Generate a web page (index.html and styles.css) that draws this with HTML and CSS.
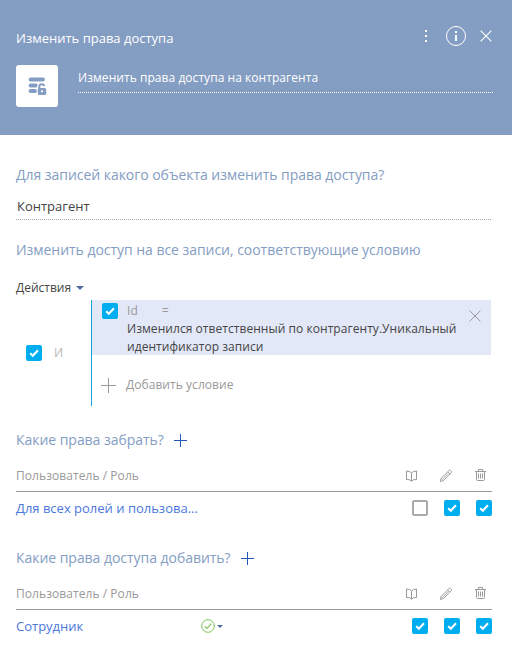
FILE: index.html
```html
<!DOCTYPE html>
<html lang="ru">
<head>
<meta charset="utf-8">
<title>Изменить права доступа</title>
<link rel="stylesheet" href="styles.css">
</head>
<body>
<svg width="0" height="0" class="defs">
  <symbol id="check" viewBox="0 0 16 16"><path d="M4.2 8.2 6.8 10.7 12 5.2" fill="none" stroke="#fff" stroke-width="2.1"/></symbol>
  <symbol id="book" viewBox="0 0 12 12"><path d="M5.5 3 3.8 1.7 .5 1V9.5L3.8 9.8 5.5 11.3 7.2 9.8 10.5 9.5V1L7.2 1.7ZM5.5 3V11" fill="none" stroke="currentColor"/></symbol>
  <symbol id="pencil" viewBox="0 0 14 14"><path d="M1.2 12.5 2.1 9.4 10 1.5Q10.8.8 11.6 1.5L12.3 2.2Q13 3 12.3 3.8L4.3 11.7ZM8.6 2.9 10.9 5.2M2.1 9.4 4.3 11.7M3.7 10 9.7 4.1" fill="none" stroke="currentColor" stroke-width=".9"/></symbol>
  <symbol id="trash" viewBox="0 0 11 13"><path d="M0 2.5H11M3.5 2.5V.5H7.5V2.5M1.5 2.5V10.5Q1.5 11.5 2.5 11.5H8.5Q9.5 11.5 9.5 10.5V2.5M3.5 4.5V9.5M5.5 4.5V9.5M7.5 4.5V9.5" fill="none" stroke="currentColor"/></symbol>
  <symbol id="plus" viewBox="0 0 13 13"><path d="M0 6.5H13M6.5 0V13" stroke="currentColor"/></symbol>
</svg>
<header class="header">
  <div class="bar">
    <h1 class="title">Изменить права доступа</h1>
    <svg class="dots" width="2" height="12" viewBox="0 0 2 12" fill="#fff"><path d="M0 0H2V2H0ZM0 5H2V7H0ZM0 10H2V12H0Z"/></svg>
    <svg class="info" width="20" height="20" viewBox="0 0 20 20"><circle cx="10" cy="10" r="9.5" fill="none" stroke="#fff"/><path d="M9 5H11V7H9ZM9 9H11V15H9Z" fill="#fff"/></svg>
    <svg width="12" height="12" viewBox="0 0 12 12"><path d="M.6.6 11.4 11.4M11.4.6.6 11.4" stroke="#fff" stroke-width="1.1"/></svg>
  </div>
  <div class="name-row">
    <div class="tile">
      <svg width="20" height="20" viewBox="0 0 20 20"><g stroke="#849dc3" fill="none"><path d="M3.5 3.5H16M3.5 9.5H9M3.5 15H8" stroke-width="3.8" stroke-linecap="round"/><path d="M12.2 13V10.8Q12.2 8 14.8 8T17.2 10" stroke="#fff" stroke-width="4"/><rect x="10" y="11.5" width="10" height="8" rx="2" fill="#fff" stroke="none"/><rect x="10.8" y="12" width="8.4" height="7" rx="1.5" fill="#849dc3" stroke="none"/><path d="M12.3 13V10.6Q12.3 8.2 14.8 8.2T17 10.2" stroke-width="2"/></g><circle cx="15" cy="15.3" r="1.1" fill="#fff"/></svg>
    </div>
    <div class="name">Изменить права доступа на контрагента</div>
  </div>
</header>
<main class="content">
  <h2 class="heading h-object">Для записей какого объекта изменить права доступа?</h2>
  <div class="object">Контрагент</div>
  <h2 class="heading h-filter">Изменить доступ на все записи, соответствующие условию</h2>
  <div class="actions">Действия <i class="caret"></i></div>
  <div class="filter">
    <div class="group"><span class="box on"><svg width="16" height="16"><use href="#check"/></svg></span><span class="and">И</span></div>
    <div class="conditions">
      <div class="condition">
        <span class="box on"><svg width="16" height="16"><use href="#check"/></svg></span>
        <div class="expr">
          <div class="left"><span>Id</span><span>=</span></div>
          <div>Изменился ответственный по контрагенту.Уникальный идентификатор записи</div>
        </div>
        <svg class="remove" width="12" height="12" viewBox="0 0 12 12"><path d="M.6.6 11.4 11.4M11.4.6.6 11.4" stroke="#999"/></svg>
      </div>
      <div class="add"><svg width="15" height="15" viewBox="0 0 15 15"><path d="M0 7.5H15M7.5 0V15" stroke="#999"/></svg><span>Добавить условие</span></div>
    </div>
  </div>
  <section class="rights">
    <h2 class="heading">Какие права забрать? <svg class="plus" width="13" height="13"><use href="#plus"/></svg></h2>
    <div class="thead"><span>Пользователь / Роль</span>
      <svg class="book" width="12" height="12"><use href="#book"/></svg><svg class="pencil" width="14" height="14"><use href="#pencil"/></svg><svg class="trash" width="11" height="13"><use href="#trash"/></svg></div>
    <div class="row"><span class="role">Для всех ролей и пользова...</span>
      <div class="checks"><span class="box"></span><span class="box on"><svg width="16" height="16"><use href="#check"/></svg></span><span class="box on"><svg width="16" height="16"><use href="#check"/></svg></span></div></div>
  </section>
  <section class="rights">
    <h2 class="heading">Какие права доступа добавить? <svg class="plus" width="13" height="13"><use href="#plus"/></svg></h2>
    <div class="thead"><span>Пользователь / Роль</span>
      <svg class="book" width="12" height="12"><use href="#book"/></svg><svg class="pencil" width="14" height="14"><use href="#pencil"/></svg><svg class="trash" width="11" height="13"><use href="#trash"/></svg></div>
    <div class="row"><span class="role">Сотрудник</span>
      <svg class="allowed" width="14" height="14" viewBox="0 0 14 14" fill="none" stroke="#7bc45c"><circle cx="7" cy="7" r="6.3"/><path d="M3.8 7.4 6 9.5 10.3 4.7" stroke-width="1.2"/></svg><i class="caret small"></i>
      <div class="checks"><span class="box on"><svg width="16" height="16"><use href="#check"/></svg></span><span class="box on"><svg width="16" height="16"><use href="#check"/></svg></span><span class="box on"><svg width="16" height="16"><use href="#check"/></svg></span></div></div>
  </section>
</main>
</body>
</html>
```
FILE: styles.css
```css
* { box-sizing: border-box; }
body { margin: 0; background: #fff; color: #444; font: 13px/20px "Open Sans", sans-serif; }
svg { display: block; flex: none; }
.defs { display: none; }
h1, h2 { margin: 0; font-weight: 400; }
.header { height: 135px; padding: 26px 19px 0 16px; background: #849dc3; color: #fff; }
.bar { display: flex; align-items: center; height: 20px; padding-right: 1px; }
.title { flex: 1; font-size: 13px; line-height: 20px; padding-top: 4px; }
.info { margin: 0 14px 0 19px; }
.name-row { display: flex; margin-top: 19px; gap: 20px; }
.tile { display: flex; align-items: center; justify-content: center; width: 42px; height: 42px; border-radius: 3px; background: #fff; }
.name { flex: 1; height: 28px; padding-top: 3px; border-bottom: 1px dotted #fff; font-size: 12px; letter-spacing: .05px; }
.content { padding: 30px 20px 0 16px; }
.heading { display: flex; align-items: center; height: 20px; color: #849dc3; font-size: 14px; line-height: 20px; letter-spacing: -.04px; }
.object { margin: 11px 1px 0 0; height: 24px; padding-left: 1px; border-bottom: 1px dotted #aaa; }
.h-filter { margin-top: 20px; }
.actions { display: flex; align-items: center; height: 20px; margin-top: 18px; font-size: 12px; }
.caret { margin: 0 0 0 5px; border: 4px solid transparent; border-top-color: #4e6da5; border-bottom: 0; }
.filter { display: flex; height: 106px; margin: 2px 1px 0 0; }
.group { display: flex; align-items: center; width: 75px; padding-left: 10px; gap: 12px; color: #b5b5b5; font-size: 12px; }
.box { display: block; flex: none; width: 16px; height: 16px; border: 2px solid #aaa; border-radius: 2px; background: #fff; }
.box.on { border: 0; background: #00aeef; }
.conditions { flex: 1; border-left: 1px solid #14a5d8; }
.condition { display: flex; height: 55px; padding: 3px 10px 0; background: #e3e8f8; font-size: 12px; line-height: 18px; }
.expr { flex: 1; margin: -1px 0 0 9px; letter-spacing: .05px; }
.left { display: flex; gap: 24px; color: #999; }
.remove { margin-top: 7px; }
.add { display: flex; align-items: center; height: 20px; margin: 20px 0 0 9px; gap: 10px; color: #999; font-size: 12px; letter-spacing: .05px; }
.rights { margin-top: 24px; }
.plus { margin-left: 10px; color: #2256b8; }
.thead { display: flex; align-items: center; height: 32px; margin-top: 10px; padding: 0 6px 0 0; border-bottom: 1px solid #999; color: #999; font-size: 12px; letter-spacing: .06px; }
.thead span { flex: 1; }
.pencil { margin: 0 22px 0 21px; }
.row { display: flex; align-items: center; height: 32px; }
.role { width: 185px; color: #4a78dc; font-size: 13px; white-space: nowrap; }
.small { margin-left: 2px; border-width: 3px 3px 0; }
.checks { display: flex; gap: 16px; margin-left: auto; }
```
